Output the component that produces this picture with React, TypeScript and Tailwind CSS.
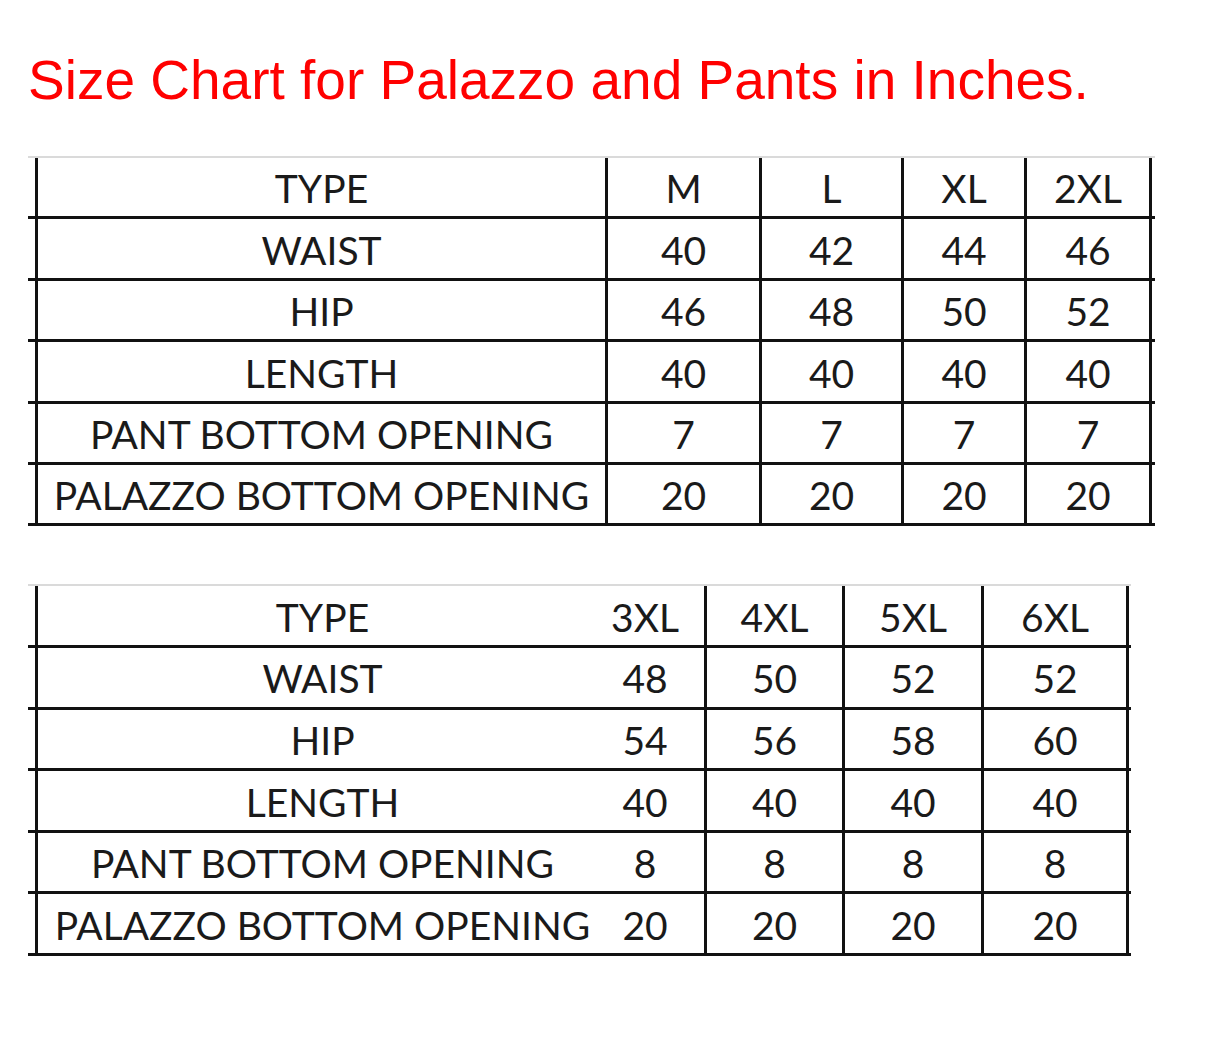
const table1 = {
  sizes: ["M", "L", "XL", "2XL"],
  rows: [
    ["WAIST", "40", "42", "44", "46"],
    ["HIP", "46", "48", "50", "52"],
    ["LENGTH", "40", "40", "40", "40"],
    ["PANT BOTTOM OPENING", "7", "7", "7", "7"],
    ["PALAZZO BOTTOM OPENING", "20", "20", "20", "20"],
  ],
};

const table2 = {
  sizes: ["3XL", "4XL", "5XL", "6XL"],
  rows: [
    ["WAIST", "48", "50", "52", "52"],
    ["HIP", "54", "56", "58", "60"],
    ["LENGTH", "40", "40", "40", "40"],
    ["PANT BOTTOM OPENING", "8", "8", "8", "8"],
    ["PALAZZO BOTTOM OPENING", "20", "20", "20", "20"],
  ],
};

const cell = "flex items-center justify-center border-r-[3px] border-[#111] pt-[3px]";

function FirstTable() {
  const all = [["TYPE", ...table1.sizes], ...table1.rows];
  return (
    <div className="w-[1127px] border-t-2 border-[#dadada]">
      {all.map((row, i) => (
        <div key={i} className="flex h-[61.4px] border-b-[3px] border-[#111]">
          <div className="w-[7px]" />
          <div className={`${cell} w-[573px] border-l-[3px]`}>{row[0]}</div>
          <div className={`${cell} w-[154px]`}>{row[1]}</div>
          <div className={`${cell} w-[142px]`}>{row[2]}</div>
          <div className={`${cell} w-[123px]`}>{row[3]}</div>
          <div className={`${cell} w-[125px]`}>{row[4]}</div>
        </div>
      ))}
    </div>
  );
}

function SecondTable() {
  const all = [["TYPE", ...table2.sizes], ...table2.rows];
  return (
    <div className="w-[1103px] border-t-2 border-[#dadada]">
      {all.map((row, i) => (
        <div key={i} className="flex h-[61.6px] border-b-[3px] border-[#111]">
          <div className="w-[7px]" />
          <div className="flex w-[572px] items-center justify-center border-l-[3px] border-[#111] pt-[3px]">
            {row[0]}
          </div>
          <div className={`${cell} w-[100px] pr-[21px]`}>{row[1]}</div>
          <div className={`${cell} w-[138px]`}>{row[2]}</div>
          <div className={`${cell} w-[139px]`}>{row[3]}</div>
          <div className={`${cell} w-[145px]`}>{row[4]}</div>
        </div>
      ))}
    </div>
  );
}

export default function App() {
  return (
    <div className="min-h-[1060px] w-[1222px] bg-white">
      <h1 className="pl-[28px] pt-[47px] font-['Liberation_Sans',Arial,sans-serif] text-[55px] leading-[66px] text-[#ff0000]">
        Size Chart for Palazzo and Pants in Inches.
      </h1>

      <div className="pl-[28px] font-['Lato',sans-serif] text-[39px] text-[#1a1a1a]">
        <div className="mt-[43px]">
          <FirstTable />
        </div>
        <div className="mt-[58px]">
          <SecondTable />
        </div>
      </div>
    </div>
  );
}
